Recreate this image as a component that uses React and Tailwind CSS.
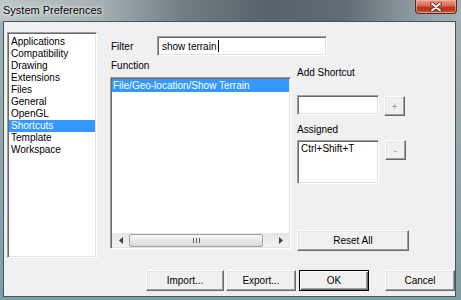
export default function App() {
  const items = [
    "Applications",
    "Compatibility",
    "Drawing",
    "Extensions",
    "Files",
    "General",
    "OpenGL",
    "Shortcuts",
    "Template",
    "Workspace",
  ];
  const sunken =
    "border border-t-[#a0a0a0] border-l-[#a0a0a0] border-r-white border-b-white shadow-[inset_1px_1px_0_#696969,inset_-1px_-1px_0_#e3e3e3]";
  const raised =
    "border border-t-white border-l-white border-r-[#696969] border-b-[#696969] shadow-[inset_-1px_-1px_0_#a0a0a0,inset_1px_1px_0_#e3e3e3] bg-[#f0f0f0]";
  return (
    <div
      className="w-[461px] h-[300px] flex flex-col overflow-hidden bg-[linear-gradient(180deg,#9fb0b4_0%,#8fa5a9_60%,#7aa1a5_100%)] text-black"
      style={{ fontFamily: '"Liberation Sans", Arial, sans-serif' }}
    >
      {/* title bar */}
      <div className="h-[21px] flex items-start bg-[linear-gradient(90deg,#bcc5c8_0%,#a3afb2_22%,#707d83_40%,#56636a_58%,#606d74_75%,#8f9ca1_90%,#a6b1b5_100%)]">
        <div className="pl-[3px] pt-[4px] text-[11px] leading-[13px] text-black [text-shadow:0_0_6px_rgba(255,255,255,0.95),0_0_3px_rgba(255,255,255,0.9)]">
          System Preferences
        </div>
        <div className="ml-auto mr-[4px] w-[42px] h-[14px] rounded-b-[4px] border border-t-0 border-[#5b2a22] bg-[linear-gradient(180deg,#e9a08e_0%,#d66a52_45%,#c2361d_55%,#b73a22_80%,#d8715a_100%)] flex items-center justify-center shadow-[inset_0_0_0_1px_rgba(255,200,180,0.5)]">
          <svg width="12" height="10" viewBox="0 0 12 10">
            <path d="M2 1.5 L10 8.5 M10 1.5 L2 8.5" stroke="#4a1a12" strokeWidth="3.6" strokeLinecap="round" />
            <path d="M2 1.5 L10 8.5 M10 1.5 L2 8.5" stroke="#ffffff" strokeWidth="2" strokeLinecap="round" />
          </svg>
        </div>
      </div>

      {/* client */}
      <div className="ml-[3px] mr-[5px] mb-[3px] flex-1 border border-[#44545a] bg-[#f0f0f0] flex flex-col text-[10px]">
        <div className="flex pt-[10px] pl-[3px]">
          {/* left list */}
          <div className={`w-[90px] h-[226px] bg-white p-[1px] ${sunken}`}>
            <div className="pt-[2px]">
              {items.map((it) => (
                <div
                  key={it}
                  className={`h-[12px] leading-[12px] pl-[2px] ${
                    it === "Shortcuts" ? "bg-[#3399ff] text-white" : "text-black"
                  }`}
                >
                  {it}
                </div>
              ))}
            </div>
          </div>

          {/* right part */}
          <div className="ml-[13px] flex flex-col">
            <div className="mt-[4px] h-[20px] flex items-center">
              <div className="w-[47px] pl-[1px]">Filter</div>
              <div className={`w-[170px] h-[20px] bg-white flex items-center pl-[4px] ${sunken}`}>
                <span>show terrain</span>
                <span className="ml-[2px] w-[1px] h-[12px] bg-black" />
              </div>
            </div>
            <div className="flex">
              {/* function column */}
              <div className="w-[181px] flex flex-col">
                <div className="mt-[4px] h-[12px] leading-[12px] pl-[1px]">Function</div>
                <div className={`mt-[5px] h-[172px] bg-white p-[1px] flex flex-col ${sunken}`}>
                  <div className="h-[13px] leading-[13px] bg-[#3399ff] text-white pl-[1px]">
                    File/Geo-location/Show Terrain
                  </div>
                  <div className="flex-1" />
                  <div className="h-[14px] flex items-center bg-[linear-gradient(180deg,#e6e6e6,#f2f2f2)]">
                    <div className="w-[17px] h-full flex items-center justify-center">
                      <svg width="4" height="7" viewBox="0 0 4 7">
                        <polygon points="4,0 0,3.5 4,7" fill="#404040" />
                      </svg>
                    </div>
                    <div className="w-[134px] h-[13px] rounded-[2px] border border-[#a3a3a3] bg-[linear-gradient(180deg,#f7f7f7_0%,#e8e8e8_50%,#d9d9d9_100%)] flex items-center justify-center gap-[2px]">
                      <div className="w-[1px] h-[5px] bg-[#5a5a5a]" />
                      <div className="w-[1px] h-[5px] bg-[#5a5a5a]" />
                      <div className="w-[1px] h-[5px] bg-[#5a5a5a]" />
                    </div>
                    <div className="flex-1" />
                    <div className="w-[17px] h-full flex items-center justify-center">
                      <svg width="4" height="7" viewBox="0 0 4 7">
                        <polygon points="0,0 4,3.5 0,7" fill="#404040" />
                      </svg>
                    </div>
                  </div>
                </div>
              </div>

              {/* shortcut column */}
              <div className="ml-[6px] flex flex-col">
                <div className="mt-[11px] h-[12px] leading-[12px]">Add Shortcut</div>
                <div className="mt-[16px] flex items-start">
                  <div className={`w-[82px] h-[20px] bg-white ${sunken}`} />
                  <div className={`ml-[5px] mt-[1px] w-[21px] h-[20px] flex items-center justify-center text-[11px] text-[#a0a0a0] ${raised}`}>
                    +
                  </div>
                </div>
                <div className="mt-[8px] h-[12px] leading-[12px]">Assigned</div>
                <div className="mt-[4px] flex items-start">
                  <div className={`w-[82px] h-[44px] bg-white pl-[3px] pt-[2px] leading-[12px] ${sunken}`}>
                    Ctrl+Shift+T
                  </div>
                  <div className={`ml-[6px] w-[21px] h-[20px] flex items-center justify-center text-[#a0a0a0] ${raised}`}>
                    -
                  </div>
                </div>
                <div className={`mt-[46px] w-[112px] h-[21px] flex items-center justify-center ${raised}`}>
                  Reset All
                </div>
              </div>
            </div>
          </div>
        </div>

        {/* bottom buttons */}
        <div className="mt-[12px] flex justify-end">
          <div className={`w-[78px] h-[21px] flex items-center justify-center ${raised}`}>Import...</div>
          <div className={`ml-[2px] w-[70px] h-[21px] flex items-center justify-center ${raised}`}>Export...</div>
          <div className="ml-[3px] w-[70px] h-[21px] flex items-center justify-center border border-black bg-[#f0f0f0] shadow-[inset_1px_1px_0_#ffffff,inset_-1px_-1px_0_#696969,inset_-2px_-2px_0_#a0a0a0]">
            OK
          </div>
          <div className={`ml-[16px] w-[70px] h-[21px] flex items-center justify-center ${raised}`}>Cancel</div>
        </div>
      </div>
    </div>
  );
}
